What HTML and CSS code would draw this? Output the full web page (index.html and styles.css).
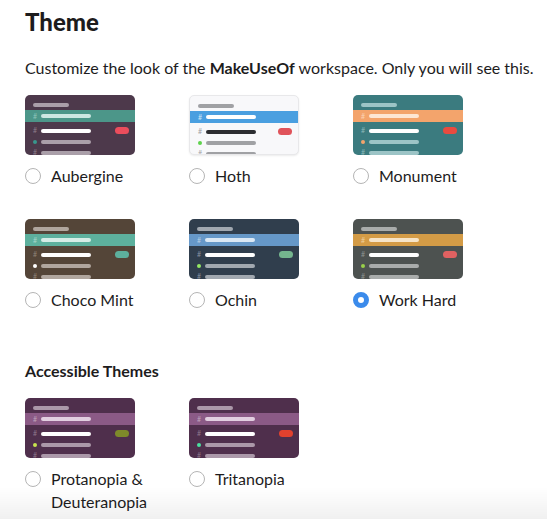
FILE: index.html
```html
<!DOCTYPE html>
<html lang="en">
<head>
  <meta charset="UTF-8">
  <meta name="viewport" content="width=device-width, initial-scale=1.0">
  <link rel="stylesheet" href="styles.css">
  <title>Theme</title>
</head>
<body>
  <div class="prefs">
    <h1 class="prefs__title">Theme</h1>
    <p class="prefs__desc">Customize the look of the <b>MakeUseOf</b> workspace. Only you will see this.</p>

    <div class="themes">
      <label class="theme theme--aubergine">
        <div class="preview">
          <div class="preview__title"></div>
          <div class="preview__row preview__row--active"><span class="preview__hash">#</span><span class="preview__bar"></span></div>
          <div class="preview__row"><span class="preview__hash">#</span><span class="preview__bar preview__bar--unread"></span><span class="preview__badge"></span></div>
          <div class="preview__row"><span class="preview__dot"></span><span class="preview__bar"></span></div>
          <div class="preview__row"><span class="preview__hash">#</span><span class="preview__bar"></span></div>
        </div>
        <div class="theme__label"><span class="radio"></span><span class="theme__name">Aubergine</span></div>
      </label>

      <label class="theme theme--hoth">
        <div class="preview">
          <div class="preview__title"></div>
          <div class="preview__row preview__row--active"><span class="preview__hash">#</span><span class="preview__bar"></span></div>
          <div class="preview__row"><span class="preview__hash">#</span><span class="preview__bar preview__bar--unread"></span><span class="preview__badge"></span></div>
          <div class="preview__row"><span class="preview__dot"></span><span class="preview__bar"></span></div>
          <div class="preview__row"><span class="preview__hash">#</span><span class="preview__bar"></span></div>
        </div>
        <div class="theme__label"><span class="radio"></span><span class="theme__name">Hoth</span></div>
      </label>

      <label class="theme theme--monument">
        <div class="preview">
          <div class="preview__title"></div>
          <div class="preview__row preview__row--active"><span class="preview__hash">#</span><span class="preview__bar"></span></div>
          <div class="preview__row"><span class="preview__hash">#</span><span class="preview__bar preview__bar--unread"></span><span class="preview__badge"></span></div>
          <div class="preview__row"><span class="preview__dot"></span><span class="preview__bar"></span></div>
          <div class="preview__row"><span class="preview__hash">#</span><span class="preview__bar"></span></div>
        </div>
        <div class="theme__label"><span class="radio"></span><span class="theme__name">Monument</span></div>
      </label>

      <label class="theme theme--choco">
        <div class="preview">
          <div class="preview__title"></div>
          <div class="preview__row preview__row--active"><span class="preview__hash">#</span><span class="preview__bar"></span></div>
          <div class="preview__row"><span class="preview__hash">#</span><span class="preview__bar preview__bar--unread"></span><span class="preview__badge"></span></div>
          <div class="preview__row"><span class="preview__dot"></span><span class="preview__bar"></span></div>
          <div class="preview__row"><span class="preview__hash">#</span><span class="preview__bar"></span></div>
        </div>
        <div class="theme__label"><span class="radio"></span><span class="theme__name">Choco Mint</span></div>
      </label>

      <label class="theme theme--ochin">
        <div class="preview">
          <div class="preview__title"></div>
          <div class="preview__row preview__row--active"><span class="preview__hash">#</span><span class="preview__bar"></span></div>
          <div class="preview__row"><span class="preview__hash">#</span><span class="preview__bar preview__bar--unread"></span><span class="preview__badge"></span></div>
          <div class="preview__row"><span class="preview__dot"></span><span class="preview__bar"></span></div>
          <div class="preview__row"><span class="preview__hash">#</span><span class="preview__bar"></span></div>
        </div>
        <div class="theme__label"><span class="radio"></span><span class="theme__name">Ochin</span></div>
      </label>

      <label class="theme theme--workhard">
        <div class="preview">
          <div class="preview__title"></div>
          <div class="preview__row preview__row--active"><span class="preview__hash">#</span><span class="preview__bar"></span></div>
          <div class="preview__row"><span class="preview__hash">#</span><span class="preview__bar preview__bar--unread"></span><span class="preview__badge"></span></div>
          <div class="preview__row"><span class="preview__dot"></span><span class="preview__bar"></span></div>
          <div class="preview__row"><span class="preview__hash">#</span><span class="preview__bar"></span></div>
        </div>
        <div class="theme__label"><span class="radio radio--checked"></span><span class="theme__name">Work Hard</span></div>
      </label>
    </div>

    <h2 class="prefs__subtitle">Accessible Themes</h2>

    <div class="themes">
      <label class="theme theme--protanopia">
        <div class="preview">
          <div class="preview__title"></div>
          <div class="preview__row preview__row--active"><span class="preview__hash">#</span><span class="preview__bar"></span></div>
          <div class="preview__row"><span class="preview__hash">#</span><span class="preview__bar preview__bar--unread"></span><span class="preview__badge"></span></div>
          <div class="preview__row"><span class="preview__dot"></span><span class="preview__bar"></span></div>
          <div class="preview__row"><span class="preview__hash">#</span><span class="preview__bar"></span></div>
        </div>
        <div class="theme__label"><span class="radio"></span><span class="theme__name">Protanopia &amp; Deuteranopia</span></div>
      </label>

      <label class="theme theme--tritanopia">
        <div class="preview">
          <div class="preview__title"></div>
          <div class="preview__row preview__row--active"><span class="preview__hash">#</span><span class="preview__bar"></span></div>
          <div class="preview__row"><span class="preview__hash">#</span><span class="preview__bar preview__bar--unread"></span><span class="preview__badge"></span></div>
          <div class="preview__row"><span class="preview__dot"></span><span class="preview__bar"></span></div>
          <div class="preview__row"><span class="preview__hash">#</span><span class="preview__bar"></span></div>
        </div>
        <div class="theme__label"><span class="radio"></span><span class="theme__name">Tritanopia</span></div>
      </label>
    </div>
  </div>

  <div class="fade"></div>
</body>
</html>
```

FILE: styles.css
```css
body {
  margin: 0;
  background: #fff;
  color: #1d1c1d;
  font-family: Lato, "Open Sans", sans-serif;
}

.prefs {
  padding: 0 0 0 25px;
}

.prefs__title {
  margin: 0;
  padding-top: 7px;
  font-size: 24px;
  line-height: 30px;
  font-weight: 900;
}

.prefs__desc {
  margin: 19px 0 16px;
  font-size: 16px;
  line-height: 23px;
  white-space: nowrap;
}

.prefs__desc b {
  font-weight: 700;
}

.prefs__subtitle {
  margin: 49px 0 16px;
  font-size: 16px;
  line-height: 22px;
  font-weight: 700;
}

.themes {
  display: grid;
  grid-template-columns: repeat(3, 140px);
  column-gap: 24px;
  row-gap: 32px;
}

.theme {
  display: block;
  cursor: pointer;
}

/* mini sidebar preview */

.preview {
  width: 110px;
  height: 60px;
  box-sizing: border-box;
  padding-top: 8px;
  border-radius: 5px;
  overflow: hidden;
  background: var(--bg);
}

.preview__title {
  width: 36px;
  height: 4px;
  margin-left: 8px;
  border-radius: 2px;
  background: var(--muted);
}

.preview__row {
  display: flex;
  align-items: center;
  height: 11px;
  padding: 0 6px 0 8px;
}

.preview__row--active {
  height: 12px;
  margin: 3px 0;
  background: var(--active);
}

.preview__hash {
  width: 8px;
  font-size: 7px;
  line-height: 7px;
  color: var(--hash);
}

.preview__row--active .preview__hash {
  color: var(--active-hash);
}

.preview__bar {
  width: 50px;
  height: 4px;
  border-radius: 2px;
  background: var(--muted);
}

.preview__row--active .preview__bar {
  background: var(--active-text);
}

.preview__bar--unread {
  background: var(--text);
}

.preview__badge {
  margin-left: auto;
  width: 14px;
  height: 7px;
  border-radius: 4px;
  background: var(--badge);
}

.preview__dot {
  width: 4px;
  height: 4px;
  margin: 0 4px 0 0;
  border-radius: 50%;
  background: var(--dot);
}

/* label + radio */

.theme__label {
  display: flex;
  align-items: flex-start;
  margin-top: 9px;
  font-size: 16px;
  line-height: 23px;
}

.radio {
  flex: none;
  width: 16px;
  height: 16px;
  box-sizing: border-box;
  margin: 4px 10px 0 0;
  border: 1px solid #b5b5b5;
  border-radius: 50%;
  background: #fff;
}

.radio--checked {
  border: 5px solid #3b8beb;
}

.fade {
  position: fixed;
  left: 0;
  right: 0;
  bottom: 0;
  height: 32px;
  background: linear-gradient(rgba(0,0,0,0), rgba(0,0,0,.06));
  pointer-events: none;
}

/* theme colours */

.theme--aubergine {
  --bg: #4d394b;
  --active: #4c9689;
  --active-text: #cde7e2;
  --active-hash: #8ec3b9;
  --text: #fff;
  --muted: #aa9fa9;
  --hash: #8c7c8a;
  --badge: #eb4d5c;
  --dot: #38978d;
}

.theme--hoth .preview {
  border: 1px solid #e8e8ea;
  box-shadow: 0 1px 2px rgba(0,0,0,.08);
}

.theme--hoth {
  --bg: #f8f8fa;
  --active: #4a9fe0;
  --active-text: #fff;
  --active-hash: #cfe5f7;
  --text: #2c2d30;
  --muted: #a0a1a4;
  --hash: #a0a1a4;
  --badge: #e0535a;
  --dot: #5ed24c;
}

.theme--monument {
  --bg: #3b7b7f;
  --active: #f3a46c;
  --active-text: #fde6d4;
  --active-hash: #fbd2b4;
  --text: #fff;
  --muted: #9cc4c6;
  --hash: #8cb8ba;
  --badge: #e94b3f;
  --dot: #f3a46c;
}

.theme--choco {
  --bg: #544538;
  --active: #5db09d;
  --active-text: #d6ece6;
  --active-hash: #a6d6ca;
  --text: #fff;
  --muted: #b0a69e;
  --hash: #8f8277;
  --badge: #5db09d;
  --dot: #fff;
}

.theme--ochin {
  --bg: #303e4d;
  --active: #6698c8;
  --active-text: #dbe8f4;
  --active-hash: #b5cde5;
  --text: #fff;
  --muted: #a1a8b0;
  --hash: #8890a0;
  --badge: #74b58e;
  --dot: #94e864;
}

.theme--workhard {
  --bg: #4d5250;
  --active: #d39b46;
  --active-text: #f6e4c8;
  --active-hash: #edcd9d;
  --text: #fff;
  --muted: #a9acab;
  --hash: #8e9291;
  --badge: #e06161;
  --dot: #99d04a;
}

.theme--protanopia {
  --bg: #4f2f4c;
  --active: #8b5a86;
  --active-text: #e2cfe0;
  --active-hash: #bfa1bb;
  --text: #fff;
  --muted: #ab98a9;
  --hash: #8e768b;
  --badge: #7e8a2a;
  --dot: #c7e34e;
}

.theme--tritanopia {
  --bg: #4f2f4c;
  --active: #8b5a86;
  --active-text: #e2cfe0;
  --active-hash: #bfa1bb;
  --text: #fff;
  --muted: #ab98a9;
  --hash: #8e768b;
  --badge: #e2412e;
  --dot: #4ae0a0;
}
```
